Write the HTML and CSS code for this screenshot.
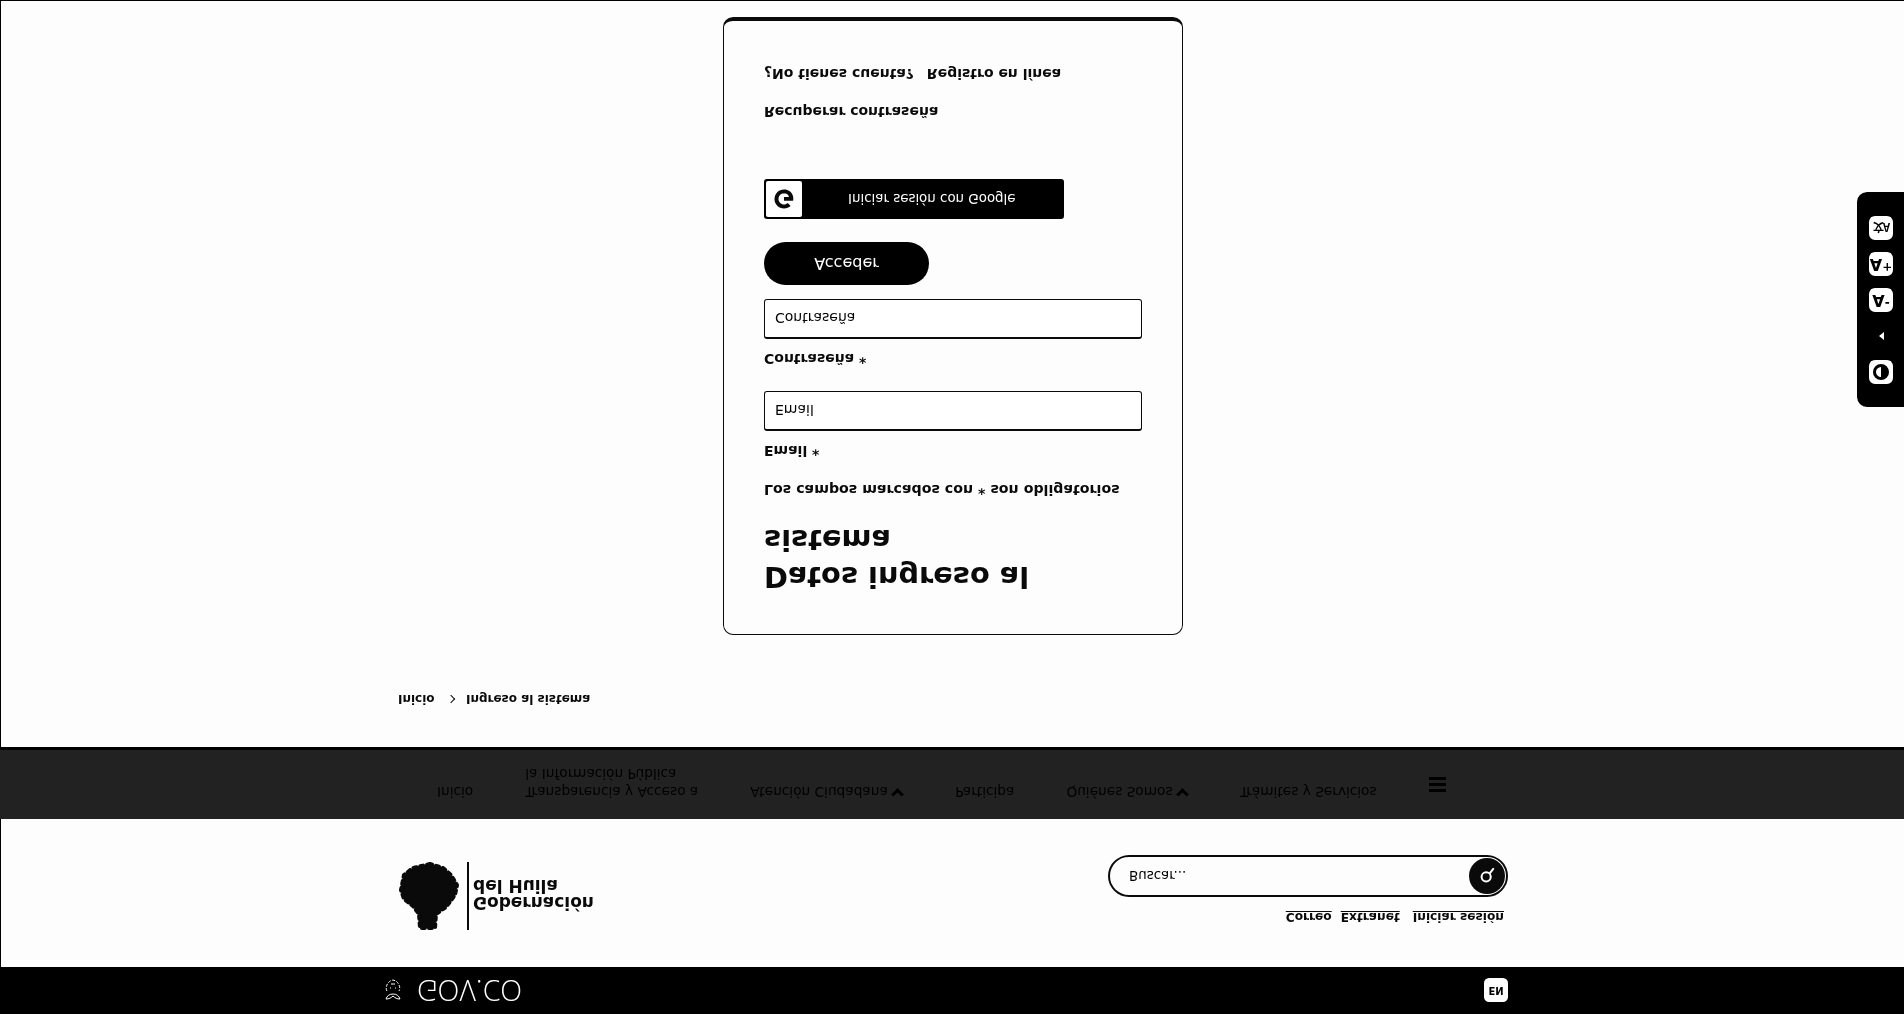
FILE: index.html
```html
<!DOCTYPE html>
<html lang="es">
<head>
    <meta charset="UTF-8">
    <meta name="viewport" content="width=device-width, initial-scale=1.0">
    <title>Ingreso al sistema</title>
    <link rel="stylesheet" href="styles.css">
</head>
<body>

<div class="page">
    <div class="gov-bar">
        <div class="gov-inner">
            <a class="gov-logo" href="#">
                <svg class="gov-mark" viewBox="0 0 24 24" fill="none" stroke="#fff" stroke-width="1">
                    <path d="M5 3c3 0 5 1 7 3 2-2 4-3 7-3-1 3-3 5-7 5S6 6 5 3z"/>
                    <path d="M6 11c-2 3 0 10 6 11 6-1 8-8 6-11" stroke-dasharray="3 1.5"/>
                    <path d="M9 14h1M14 14h1M10 18h4"/>
                </svg>
                <span class="gov-text">GOV.CO</span>
            </a>
            <a class="lang-tile" href="#">EN</a>
        </div>
    </div>

    <header class="site-head">
        <a class="brand" href="#">
            <svg class="brand-tree" viewBox="0 0 62 68">
                <path d="M32 66L15 62 6 55 3 40 6 31 15 24 21 16 22 2 37 2 38 16 48 23 57 35 59 45 53 55 45 62z" fill="#0a0a0a" stroke="#0a0a0a" stroke-width="4" stroke-linejoin="round" stroke-linecap="round" stroke-dasharray="3 4"/>
            </svg>
            <span class="brand-name">Gobernación<br>del Huila</span>
        </a>
        <div class="head-tools">
            <div class="head-links">
                <a href="#">Correo</a>
                <a href="#">Extranet</a>
                <a class="head-login" href="#">Iniciar sesión</a>
            </div>
            <form class="search-box">
                <input type="text" placeholder="Buscar...">
                <button type="button" aria-label="Buscar">
                    <svg viewBox="0 0 24 24" fill="none" stroke="#fff" stroke-width="2.4" stroke-linecap="round">
                        <circle cx="11" cy="11" r="5.5"/>
                        <path d="M15.5 15.5l4 5"/>
                    </svg>
                </button>
            </form>
        </div>
    </header>

    <nav class="main-nav">
        <a href="#">Inicio</a>
        <a href="#">Transparencia y Acceso a<br>la Información Pública</a>
        <a href="#">Atención Ciudadana <span class="caret"></span></a>
        <a href="#">Participa</a>
        <a href="#">Quiénes Somos <span class="caret"></span></a>
        <a href="#">Trámites y Servicios</a>
        <span class="burger"><i></i><i></i><i></i></span>
    </nav>

    <div class="breadcrumb">
        <a href="#">Inicio</a>
        <span class="sep"></span>
        <span>Ingreso al sistema</span>
    </div>

    <main class="card">
        <h1>Datos ingreso al sistema</h1>
        <p class="required-note">Los campos marcados con * son obligatorios</p>
        <form class="login-form">
            <label for="email">Email *</label>
            <input type="email" id="email" placeholder="Email">
            <label for="password">Contraseña *</label>
            <input type="password" id="password" placeholder="Contraseña">
            <button type="submit" class="btn-access">Acceder</button>
        </form>
        <a class="btn-google" href="#">
            <span class="google-tile">
                <svg viewBox="0 0 24 24" fill="#0a0a0a">
                    <path d="M12 2.5c2.7 0 4.9 1 6.6 2.6l-2.8 2.8C14.800 7 13.500 6.400 12 6.400c-3.100 0-5.500 2.500-5.500 5.600s2.400 5.600 5.500 5.600c2.700 0 4.600-1.500 5-3.700H12v-3.700h9.100c.2.700.2 1.300.2 2 0 5.500-3.700 9.300-9.300 9.300-5.300 0-9.500-4.200-9.500-9.500S6.700 2.500 12 2.500z"/>
                </svg>
            </span>
            <span class="google-label">Iniciar sesión con Google</span>
        </a>
        <p class="card-link recover"><a href="#">Recuperar contraseña</a></p>
        <p class="card-link register">¿No tienes cuenta? <a href="#">Registro en línea</a></p>
    </main>

    <aside class="access-bar">
        <span class="access-tile contrast"><i></i></span>
        <span class="access-tile arrow"></span>
        <span class="access-tile">A<small>-</small></span>
        <span class="access-tile">A<small>+</small></span>
        <span class="access-tile translate">文A</span>
    </aside>
</div>

</body>
</html>
```

FILE: styles.css
```css
html, body {
    margin: 0;
    height: 100%;
    overflow: hidden;
}
body {
    font-family: "DejaVu Sans", Verdana, sans-serif;
    font-size: 14px;
    color: #0a0a0a;
    background-color: #fdfdfd;
}
a {
    color: inherit;
    text-decoration: none;
}
.page {
    position: relative;
    width: 1904px;
    height: 1014px;
    box-sizing: border-box;
    border-left: 1px solid #000;
    border-bottom: 1px solid #000;
    transform: scaleY(-1);
}

/* top bar */
.gov-bar {
    height: 47px;
    margin-left: -1px;
    background-color: #000;
}
.gov-inner {
    width: 1127px;
    height: 100%;
    margin-left: 381px;
    display: flex;
    justify-content: space-between;
    align-items: center;
}
.gov-logo {
    display: flex;
    align-items: center;
    gap: 12px;
    color: #fff;
}
.gov-mark {
    width: 24px;
    height: 24px;
}
.gov-text {
    font-family: "Open Sans", sans-serif;
    font-weight: 300;
    font-size: 28.5px;
    line-height: 1;
}
.lang-tile {
    width: 24px;
    height: 24px;
    border-radius: 5px;
    background-color: #fff;
    color: #000;
    font-weight: bold;
    font-size: 10px;
    line-height: 24px;
    text-align: center;
}

/* logo and search */
.site-head {
    height: 148px;
    box-sizing: border-box;
    padding: 37px 0 0 397px;
    display: flex;
    justify-content: space-between;
    width: 1507px;
}
.brand {
    display: flex;
    align-items: center;
    height: 68px;
    gap: 4px;
}
.brand-tree {
    width: 62px;
    height: 68px;
    padding-right: 7px;
    border-right: 2px solid #0a0a0a;
}
.brand-name {
    padding-top: 4px;
    font-weight: bold;
    font-size: 17px;
    line-height: 17px;
}
.head-tools {
    width: 400px;
    padding-top: 5px;
}
.head-links {
    display: flex;
    justify-content: flex-end;
    gap: 9px;
    padding-right: 4px;
    font-size: 12.2px;
    font-weight: bold;
    line-height: 16px;
    height: 28px;
}
.head-links a {
    text-decoration: underline;
}
.head-links .head-login {
    margin-left: 4px;
}
.search-box {
    display: flex;
    align-items: center;
    box-sizing: border-box;
    height: 42px;
    padding: 0 1px 0 17px;
    border: 2px solid #0a0a0a;
    border-radius: 21px;
}
.search-box input {
    flex: 1;
    border: none;
    outline: none;
    background: none;
    font-family: inherit;
    font-size: 13.4px;
    color: #000;
}
.search-box input::placeholder {
    color: #000;
    opacity: 1;
}
.search-box button {
    width: 36px;
    height: 36px;
    padding: 8px;
    border: none;
    border-radius: 50%;
    background-color: #0a0a0a;
}

/* menu */
.main-nav {
    height: 72px;
    box-sizing: border-box;
    margin-left: -1px;
    padding: 18px 0 0 437px;
    display: flex;
    align-items: flex-start;
    gap: 52px;
    background-color: #222;
    border-bottom: 3px solid #000;
    color: #000;
    font-size: 13.7px;
    line-height: 18px;
}
.caret {
    display: inline-block;
    width: 6px;
    height: 6px;
    margin: 0 1px 3px 1px;
    border-right: 3px solid #000;
    border-bottom: 3px solid #000;
    transform: rotate(45deg);
}
.burger {
    display: flex;
    flex-direction: column;
    gap: 3px;
    width: 17px;
    padding-top: 9px;
}
.burger i {
    height: 3px;
    background-color: #000;
}

/* breadcrumb */
.breadcrumb {
    padding: 40px 0 0 397px;
    height: 72px;
    box-sizing: border-box;
    font-weight: bold;
    font-size: 12px;
    line-height: 17px;
}
.breadcrumb .sep {
    display: inline-block;
    width: 5px;
    height: 5px;
    margin: 0 8px 1px 9px;
    border-top: 1.5px solid #0a0a0a;
    border-right: 1.5px solid #0a0a0a;
    transform: rotate(45deg);
}

/* login card */
.card {
    width: 460px;
    height: 618px;
    box-sizing: border-box;
    margin: 40px 0 0 722px;
    padding: 39px 40px 0;
    background-color: #fdfdfd;
    border: 1px solid #0a0a0a;
    border-bottom: 4px solid #0a0a0a;
    border-radius: 10px;
}
h1 {
    margin: 0;
    font-size: 28.8px;
    line-height: 37px;
}
.required-note {
    margin: 23px 0 0;
    font-weight: bold;
    font-size: 14.2px;
    line-height: 17px;
}
.login-form {
    display: flex;
    flex-direction: column;
    align-items: flex-start;
}
.login-form label {
    margin-top: 22px;
    font-weight: bold;
    line-height: 17px;
}
.login-form input + label {
    margin-top: 12px;
}
.login-form input {
    width: 378px;
    height: 40px;
    box-sizing: border-box;
    margin-top: 11px;
    margin-bottom: 12px;
    padding: 0 10px;
    border: 1px solid #0a0a0a;
    border-top-width: 2px;
    border-radius: 3px;
    background-color: #fff;
    font-family: inherit;
    font-size: 14px;
}
.login-form input::placeholder {
    color: #000;
    opacity: 1;
}
.btn-access {
    width: 165px;
    height: 43px;
    margin-top: 2px;
    border: none;
    border-radius: 22px;
    background-color: #000;
    color: #fff;
    font-family: inherit;
    font-size: 16px;
}
.btn-google {
    display: flex;
    align-items: center;
    width: 300px;
    height: 40px;
    box-sizing: border-box;
    margin-top: 23px;
    border: 2px solid #000;
    border-radius: 3px;
    background-color: #000;
    color: #fff;
    font-size: 13.4px;
}
.google-tile {
    display: flex;
    align-items: center;
    justify-content: center;
    width: 36px;
    height: 36px;
    border-radius: 2px;
    background-color: #fff;
}
.google-tile svg {
    width: 24px;
    height: 24px;
}
.google-label {
    margin-left: 46px;
}
.card-link {
    margin: 0;
    font-weight: bold;
    line-height: 17px;
}
.recover {
    margin-top: 59px;
}
.register {
    margin-top: 21px;
}
.register a {
    margin-left: 8px;
}

/* accessibility widget */
.access-bar {
    position: absolute;
    top: 607px;
    right: 0;
    width: 47px;
    height: 215px;
    box-sizing: border-box;
    padding: 23px 0 0 12px;
    background-color: #000;
    border-radius: 10px 0 0 10px;
    display: flex;
    flex-direction: column;
    gap: 12px;
}
.access-tile {
    display: flex;
    align-items: center;
    justify-content: center;
    width: 24px;
    height: 24px;
    border-radius: 6px;
    background-color: #fff;
    color: #000;
    font-weight: bold;
    font-size: 16px;
    line-height: 1;
}
.access-tile small {
    align-self: flex-start;
    margin-top: 3px;
    font-size: 12px;
}
.translate {
    font-family: "Noto Sans CJK SC", "DejaVu Sans", sans-serif;
    font-size: 11px;
    letter-spacing: -1px;
}
.contrast i {
    width: 16px;
    height: 16px;
    box-sizing: border-box;
    border: 3px solid #000;
    border-radius: 50%;
    background: linear-gradient(90deg, #fff 50%, #000 50%);
}
.arrow {
    background-color: #000;
}
.arrow::after {
    content: '';
    border-style: solid;
    border-width: 4px 5px 4px 0;
    border-color: transparent #fff transparent transparent;
}
```
